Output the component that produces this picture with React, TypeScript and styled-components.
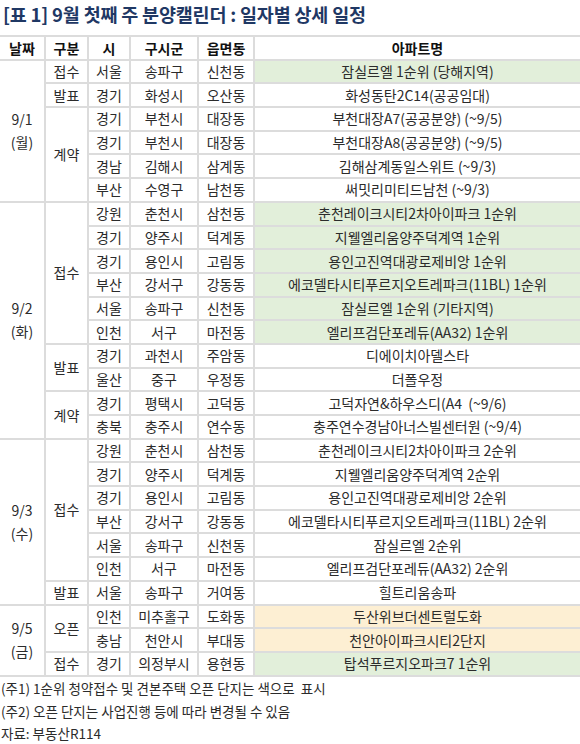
import styled, { createGlobalStyle } from 'styled-components';

const GlobalStyle = createGlobalStyle`
  body {
    margin: 0;
    background: #fff;
    font-family: 'Noto Sans CJK KR', 'Noto Sans', sans-serif;
  }
`;

type Tone = 'green' | 'gold' | undefined;

interface Row {
  si: string;
  gu: string;
  dong: string;
  name: string;
  tone?: Tone;
}

interface Category {
  label: string;
  rows: Row[];
}

interface DateGroup {
  date: string;
  day: string;
  categories: Category[];
}

const schedule: DateGroup[] = [
  {
    date: '9/1',
    day: '(월)',
    categories: [
      { label: '접수', rows: [{ si: '서울', gu: '송파구', dong: '신천동', name: '잠실르엘 1순위 (당해지역)', tone: 'green' }] },
      { label: '발표', rows: [{ si: '경기', gu: '화성시', dong: '오산동', name: '화성동탄2C14(공공임대)' }] },
      {
        label: '계약',
        rows: [
          { si: '경기', gu: '부천시', dong: '대장동', name: '부천대장A7(공공분양) (~9/5)' },
          { si: '경기', gu: '부천시', dong: '대장동', name: '부천대장A8(공공분양) (~9/5)' },
          { si: '경남', gu: '김해시', dong: '삼계동', name: '김해삼계동일스위트 (~9/3)' },
          { si: '부산', gu: '수영구', dong: '남천동', name: '써밋리미티드남천 (~9/3)' },
        ],
      },
    ],
  },
  {
    date: '9/2',
    day: '(화)',
    categories: [
      {
        label: '접수',
        rows: [
          { si: '강원', gu: '춘천시', dong: '삼천동', name: '춘천레이크시티2차아이파크 1순위', tone: 'green' },
          { si: '경기', gu: '양주시', dong: '덕계동', name: '지웰엘리움양주덕계역 1순위', tone: 'green' },
          { si: '경기', gu: '용인시', dong: '고림동', name: '용인고진역대광로제비앙 1순위', tone: 'green' },
          { si: '부산', gu: '강서구', dong: '강동동', name: '에코델타시티푸르지오트레파크(11BL) 1순위', tone: 'green' },
          { si: '서울', gu: '송파구', dong: '신천동', name: '잠실르엘 1순위 (기타지역)', tone: 'green' },
          { si: '인천', gu: '서구', dong: '마전동', name: '엘리프검단포레듀(AA32) 1순위', tone: 'green' },
        ],
      },
      {
        label: '발표',
        rows: [
          { si: '경기', gu: '과천시', dong: '주암동', name: '디에이치아델스타' },
          { si: '울산', gu: '중구', dong: '우정동', name: '더폴우정' },
        ],
      },
      {
        label: '계약',
        rows: [
          { si: '경기', gu: '평택시', dong: '고덕동', name: '고덕자연&하우스디(A4  (~9/6)' },
          { si: '충북', gu: '충주시', dong: '연수동', name: '충주연수경남아너스빌센터원 (~9/4)' },
        ],
      },
    ],
  },
  {
    date: '9/3',
    day: '(수)',
    categories: [
      {
        label: '접수',
        rows: [
          { si: '강원', gu: '춘천시', dong: '삼천동', name: '춘천레이크시티2차아이파크 2순위' },
          { si: '경기', gu: '양주시', dong: '덕계동', name: '지웰엘리움양주덕계역 2순위' },
          { si: '경기', gu: '용인시', dong: '고림동', name: '용인고진역대광로제비앙 2순위' },
          { si: '부산', gu: '강서구', dong: '강동동', name: '에코델타시티푸르지오트레파크(11BL) 2순위' },
          { si: '서울', gu: '송파구', dong: '신천동', name: '잠실르엘 2순위' },
          { si: '인천', gu: '서구', dong: '마전동', name: '엘리프검단포레듀(AA32) 2순위' },
        ],
      },
      { label: '발표', rows: [{ si: '서울', gu: '송파구', dong: '거여동', name: '힐트리움송파' }] },
    ],
  },
  {
    date: '9/5',
    day: '(금)',
    categories: [
      {
        label: '오픈',
        rows: [
          { si: '인천', gu: '미추홀구', dong: '도화동', name: '두산위브더센트럴도화', tone: 'gold' },
          { si: '충남', gu: '천안시', dong: '부대동', name: '천안아이파크시티2단지', tone: 'gold' },
        ],
      },
      { label: '접수', rows: [{ si: '경기', gu: '의정부시', dong: '용현동', name: '탑석푸르지오파크7 1순위', tone: 'green' }] },
    ],
  },
];

const notes = [
  '(주1) 1순위 청약접수 및 견본주택 오픈 단지는 색으로  표시',
  '(주2) 오픈 단지는 사업진행 등에 따라 변경될 수 있음',
  '자료: 부동산R114',
];

const Page = styled.div`
  width: 580px;
  color: #2b2b2b;
`;

const Title = styled.h1`
  margin: 0;
  padding: 1px 0 0 3px;
  height: 34px;
  font-size: 18.5px;
  font-weight: 700;
  line-height: 26px;
  color: #1f3864;
  letter-spacing: -0.2px;
  white-space: nowrap;
`;

const Table = styled.table`
  width: 580px;
  table-layout: fixed;
  border-collapse: collapse;
  font-size: 14px;
`;

const HeadCell = styled.th`
  height: 21.7px;
  padding: 0;
  font-weight: 700;
  color: #111;
  text-align: center;
  border: 2px solid #dcdcdc;
  &:first-child { border-left: none; }
  &:last-child { border-right: none; }
`;

const toneColor = (tone: Tone) =>
  tone === 'green' ? '#e2efda' : tone === 'gold' ? '#fdefd3' : '#fff';

const Cell = styled.td<{ $tone?: Tone }>`
  height: 21.7px;
  padding: 0;
  line-height: 21px;
  text-align: center;
  white-space: pre;
  overflow: hidden;
  background: ${(p) => toneColor(p.$tone)};
  border: 2px solid #dcdcdc;
  &:last-child { border-right: none; }
`;

const DateCell = styled(Cell)`
  border-left: none;
  line-height: 23px;
`;

const Notes = styled.div`
  display: flex;
  flex-direction: column;
  padding: 0 0 0 1px;
  font-size: 13.5px;
  line-height: 23px;
  white-space: pre;
`;

const Note = styled.span`
  &:last-child {
    line-height: 20px;
  }
`;

export default function App() {
  return (
    <Page>
      <GlobalStyle />
      <Title>[표 1] 9월 첫째 주 분양캘린더 : 일자별 상세 일정</Title>
      <Table>
        <colgroup>
          <col style={{ width: 45 }} />
          <col style={{ width: 43 }} />
          <col style={{ width: 42 }} />
          <col style={{ width: 68 }} />
          <col style={{ width: 56 }} />
          <col />
        </colgroup>
        <thead>
          <tr>
            <HeadCell>날짜</HeadCell>
            <HeadCell>구분</HeadCell>
            <HeadCell>시</HeadCell>
            <HeadCell>구시군</HeadCell>
            <HeadCell>읍면동</HeadCell>
            <HeadCell>아파트명</HeadCell>
          </tr>
        </thead>
        <tbody>
          {schedule.map((group) => {
            const total = group.categories.reduce((n, c) => n + c.rows.length, 0);
            return group.categories.map((cat, ci) =>
              cat.rows.map((row, ri) => (
                <tr key={`${group.date}-${ci}-${ri}`}>
                  {ci === 0 && ri === 0 && (
                    <DateCell rowSpan={total}>
                      {group.date}
                      <br />
                      {group.day}
                    </DateCell>
                  )}
                  {ri === 0 && <Cell rowSpan={cat.rows.length}>{cat.label}</Cell>}
                  <Cell>{row.si}</Cell>
                  <Cell>{row.gu}</Cell>
                  <Cell>{row.dong}</Cell>
                  <Cell $tone={row.tone}>{row.name}</Cell>
                </tr>
              ))
            );
          })}
        </tbody>
      </Table>
      <Notes>
        {notes.map((n) => (
          <Note key={n}>{n}</Note>
        ))}
      </Notes>
    </Page>
  );
}
